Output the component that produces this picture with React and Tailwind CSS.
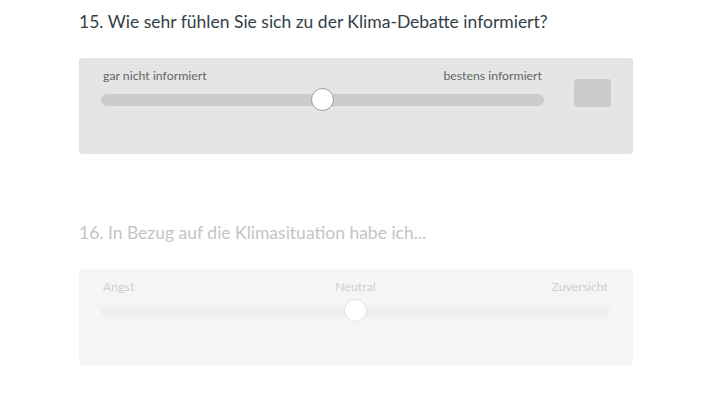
import React from 'react';

const Slider = ({ value, muted }) => (
  <div className="relative h-[23px] flex items-center">
    <div className={`w-full h-[12px] rounded-full ${muted ? 'bg-[#efefef]' : 'bg-[#cccccc]'}`} />
    <div
      className={`absolute top-0 w-[23px] h-[23px] -ml-[11.5px] rounded-full bg-white border ${muted ? 'border-[#e2e2e2]' : 'border-[#9a9a9a]'}`}
      style={{ left: `${value}%` }}
    />
  </div>
);

export default function App() {
  return (
    <div className="w-[720px] h-[402px] bg-white pl-[79px] pr-[87px] pt-[10px]" style={{ fontFamily: 'Lato, "Open Sans", sans-serif' }}>
      <h2 className="text-[17.5px] leading-[24px] text-[#333e48]">
        15. Wie sehr fühlen Sie sich zu der Klima-Debatte informiert?
      </h2>

      <div className="mt-[24px] h-[96px] bg-[#e5e5e5] rounded-[3px] flex pl-[22px] pr-[22px] pt-[9px]">
        <div className="w-[443px]">
          <div className="flex justify-between text-[12.3px] leading-[17px] text-[#666666] px-[2px]">
            <span>gar nicht informiert</span>
            <span>bestens informiert</span>
          </div>
          <div className="mt-[4px]">
            <Slider value={50} />
          </div>
        </div>
        <div className="ml-[30px] mt-[12px] w-[37px] h-[28px] bg-[#cccccc] rounded-[3px]" />
      </div>

      <h2 className="mt-[67px] text-[17.5px] leading-[24px] text-[#c4c4c4]">
        16. In Bezug auf die Klimasituation habe ich...
      </h2>

      <div className="mt-[24px] h-[96px] bg-[#f5f5f5] rounded-[3px] pl-[22px] pr-[23px] pt-[9px]">
        <div className="grid grid-cols-3 text-[12.3px] leading-[17px] text-[#cfcfcf] px-[2px]">
          <span>Angst</span>
          <span className="text-center">Neutral</span>
          <span className="text-right">Zuversicht</span>
        </div>
        <div className="mt-[4px]">
          <Slider value={50} muted />
        </div>
      </div>
    </div>
  );
}
